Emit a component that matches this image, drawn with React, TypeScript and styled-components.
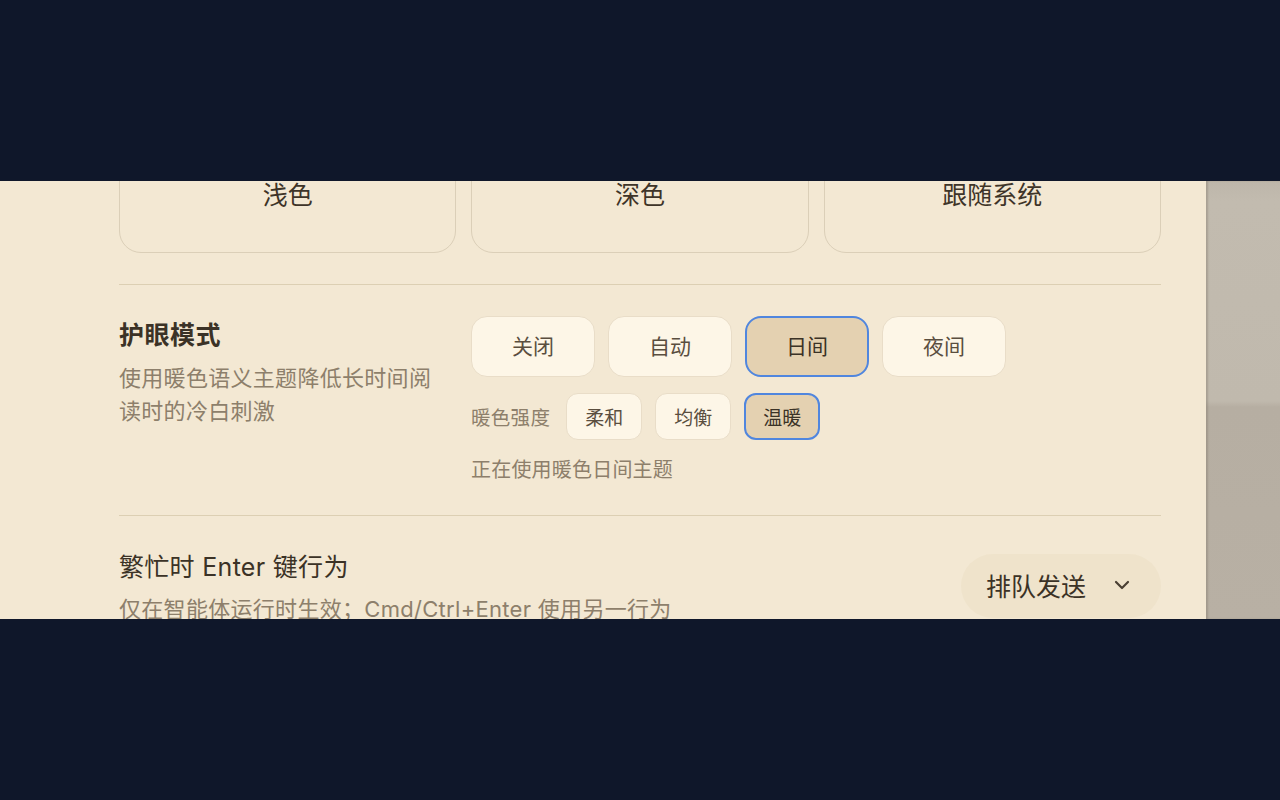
import React from "react";
import styled, { createGlobalStyle } from "styled-components";

const Global = createGlobalStyle`
  html, body { margin: 0; padding: 0; background: #0f172a; }
  body { font-family: "Inter", "Noto Sans CJK SC", "Noto Sans", sans-serif; }
  * { box-sizing: border-box; }
`;

const Screen = styled.div`
  width: 1280px;
  height: 800px;
  background: #0f172a;
  display: flex;
  flex-direction: column;
  justify-content: center;
`;

const Strip = styled.div`
  height: 438px;
  display: flex;
  overflow: hidden;
`;

const Panel = styled.div`
  width: 1206px;
  flex: none;
  background: #f3e8d3;
  padding: 0 45px 0 119px;
  color: #3b3226;
`;

const Side = styled.div`
  flex: 1;
  background: linear-gradient(180deg, #bdb6aa 0px, #c2bbaf 20px, #c0b9ad 220px, #b6aea2 226px, #b8b0a4 100%);
  box-shadow: inset 2px 0 2px rgba(120, 110, 95, 0.35);
`;

const ThemeGrid = styled.div`
  display: grid;
  grid-template-columns: repeat(3, 1fr);
  gap: 15px;
  margin-top: -28px;
  padding-bottom: 31px;
  border-bottom: 1px solid #dccfb3;
`;

const ThemeCard = styled.div`
  height: 100px;
  border: 1.5px solid #dbcfb8;
  border-radius: 22px;
  display: flex;
  justify-content: center;
  padding-top: 26px;
  font-size: 25px;
  line-height: 30px;
  color: #3e3428;
`;

const Section = styled.div<{ $last?: boolean }>`
  display: grid;
  grid-template-columns: 320px 1fr;
  column-gap: 32px;
  padding: 31px 0 32px;
  border-bottom: ${(p) => (p.$last ? "none" : "1px solid #dccfb3")};
`;

const Info = styled.div`
  padding-top: 3px;
  display: flex;
  flex-direction: column;
  gap: 11px;
`;

const Title = styled.div<{ $bold?: boolean }>`
  font-size: 25px;
  line-height: 32px;
  font-weight: ${(p) => (p.$bold ? 700 : 400)};
  letter-spacing: ${(p) => (p.$bold ? "0.5px" : "0.3px")};
  color: #3b3226;
  white-space: nowrap;
`;

const Desc = styled.div`
  font-size: 22px;
  line-height: 33px;
  letter-spacing: 0.3px;
  color: #8d7f6b;
  white-space: nowrap;
`;

const WrapDesc = styled(Desc)`
  white-space: normal;
  width: 322px;
`;

const Controls = styled.div`
  display: flex;
  flex-direction: column;
  gap: 16px;
`;

const ButtonRow = styled.div`
  display: flex;
  align-items: center;
  gap: 13px;
`;

const Choice = styled.div<{ $active?: boolean; $small?: boolean }>`
  width: ${(p) => (p.$small ? 76 : 124)}px;
  height: ${(p) => (p.$small ? 47 : 61)}px;
  border-radius: ${(p) => (p.$small ? 12 : 16)}px;
  display: flex;
  align-items: center;
  justify-content: center;
  padding-bottom: ${(p) => (p.$small ? 1 : 4)}px;
  font-size: ${(p) => (p.$small ? 19 : 21)}px;
  color: ${(p) => (p.$active ? "#3b3226" : "#5a4e3f")};
  background: ${(p) => (p.$active ? "#e4d1b1" : "#fdf6e7")};
  border: ${(p) => (p.$active ? "2px solid #5086de" : "1.5px solid #e9ddc8")};
`;

const Label = styled.div`
  font-size: 19.5px;
  letter-spacing: 0.3px;
  color: #8d7f6b;
  margin-right: 3px;
  white-space: nowrap;
`;

const Status = styled.div`
  margin-top: 1px;
  font-size: 20px;
  letter-spacing: 0.2px;
  line-height: 26px;
  color: #8d7f6b;
`;

const EnterRow = styled.div`
  display: flex;
  align-items: center;
  justify-content: space-between;
  padding-top: 35px;
`;

const TextBlock = styled.div`
  display: flex;
  flex-direction: column;
  gap: 10px;
`;

const Select = styled.div`
  width: 200px;
  height: 64px;
  margin-bottom: 5px;
  border-radius: 32px;
  background: #efe3cb;
  display: flex;
  align-items: center;
  justify-content: space-between;
  padding: 0 27px 2px 25px;
  font-size: 25px;
  color: #3b3226;
`;

const Chevron = () => (
  <svg width="24" height="24" viewBox="0 0 24 24" fill="none" stroke="#4a4033" strokeWidth="2.2" strokeLinecap="round" strokeLinejoin="round">
    <path d="M6 9l6 6 6-6" />
  </svg>
);

export default function App() {
  return (
    <>
      <Global />
      <Screen>
        <Strip>
          <Panel>
            <ThemeGrid>
              <ThemeCard>浅色</ThemeCard>
              <ThemeCard>深色</ThemeCard>
              <ThemeCard>跟随系统</ThemeCard>
            </ThemeGrid>
            <Section>
              <Info>
                <Title $bold>护眼模式</Title>
                <WrapDesc>使用暖色语义主题降低长时间阅读时的冷白刺激</WrapDesc>
              </Info>
              <Controls>
                <ButtonRow>
                  <Choice>关闭</Choice>
                  <Choice>自动</Choice>
                  <Choice $active>日间</Choice>
                  <Choice>夜间</Choice>
                </ButtonRow>
                <ButtonRow>
                  <Label>暖色强度</Label>
                  <Choice $small>柔和</Choice>
                  <Choice $small>均衡</Choice>
                  <Choice $small $active>温暖</Choice>
                </ButtonRow>
                <Status>正在使用暖色日间主题</Status>
              </Controls>
            </Section>
            <EnterRow>
              <TextBlock>
                <Title>繁忙时 Enter 键行为</Title>
                <Desc>仅在智能体运行时生效；Cmd/Ctrl+Enter 使用另一行为</Desc>
              </TextBlock>
              <Select>
                <span>排队发送</span>
                <Chevron />
              </Select>
            </EnterRow>
          </Panel>
          <Side />
        </Strip>
      </Screen>
    </>
  );
}
